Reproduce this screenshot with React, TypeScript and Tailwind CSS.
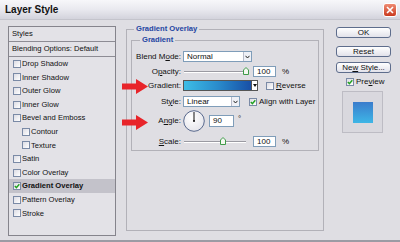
import React from "react";

const FONT = { fontFamily: '"Liberation Sans", Arial, sans-serif' };

function Check({ checked = false }: { checked?: boolean }) {
  return (
    <span className="flex h-[8px] w-[8px] shrink-0 items-center justify-center border border-[#7a8aa6] bg-gradient-to-br from-[#dcdce4] to-white">
      {checked && (
        <svg width="6" height="6" viewBox="0 0 6 6">
          <path d="M0.8 3 L2.4 4.6 L5.3 1.2" fill="none" stroke="#21a121" strokeWidth="1.4" />
        </svg>
      )}
    </span>
  );
}

function Btn({ children }: { children: React.ReactNode }) {
  return (
    <div className="flex h-[11px] w-[55px] items-center justify-center rounded-[3px] border border-[#5e6d8c] bg-gradient-to-b from-white to-[#e2e2ea] text-[8px] leading-none text-[#111]">
      {children}
    </div>
  );
}

function Select({ value, width }: { value: string; width: string }) {
  return (
    <div className={`flex h-[11px] items-center justify-between border border-[#7f9db9] bg-white pl-[3px] ${width}`}>
      <span className="text-[8px] leading-none">{value}</span>
      <span className="flex h-[9px] w-[8px] items-center justify-center border-l border-[#b8bccb] bg-[#eef0f6]">
        <svg width="5" height="4" viewBox="0 0 5 4">
          <path d="M0.5 0.8 L2.5 3 L4.5 0.8" fill="none" stroke="#222" strokeWidth="1" />
        </svg>
      </span>
    </div>
  );
}

function Slider({ width, pos }: { width: string; pos: number }) {
  return (
    <div className={`relative flex h-[11px] items-center ${width}`}>
      <div className="h-[2px] w-full border-t border-[#9a9aa2] bg-white" />
      <svg className="absolute top-[1px]" style={{ left: pos }} width="6" height="8" viewBox="0 0 6 8">
        <path d="M0.5 3 L3 0.5 L5.5 3 V7.5 H0.5 Z" fill="#f4f8f0" stroke="#3f9a4a" strokeWidth="1" />
      </svg>
    </div>
  );
}

function Input({ value, width }: { value: string; width: string }) {
  return (
    <div className={`flex h-[11px] items-center border border-[#7f9db9] bg-white pl-[3px] text-[8px] leading-none ${width}`}>
      {value}
    </div>
  );
}

function Arrow({ top }: { top: string }) {
  return (
    <svg className={`absolute left-[122px] ${top}`} width="26" height="15" viewBox="0 0 26 15">
      <path d="M0 4.5 H14 V0 L26 7.5 L14 15 V10.5 H0 Z" fill="#e8242a" />
    </svg>
  );
}

const items: { name: string; indent?: boolean; checked?: boolean; active?: boolean }[] = [
  { name: "Drop Shadow" },
  { name: "Inner Shadow" },
  { name: "Outer Glow" },
  { name: "Inner Glow" },
  { name: "Bevel and Emboss" },
  { name: "Contour", indent: true },
  { name: "Texture", indent: true },
  { name: "Satin" },
  { name: "Color Overlay" },
  { name: "Gradient Overlay", checked: true, active: true },
  { name: "Pattern Overlay" },
  { name: "Stroke" },
];

export default function App() {
  return (
    <div
      className="relative flex h-[242px] w-[400px] flex-col overflow-hidden border-b-2 border-[#9c9ba4] bg-[#dfdee3] text-[#111]"
      style={FONT}
    >
      {/* title bar */}
      <div className="flex h-[20px] shrink-0 items-center justify-between border-b border-[#c4c4cc] bg-gradient-to-b from-[#f7f7fa] via-[#e9e9ef] to-[#d3d3dc] pl-[5px] pr-[3px]">
        <span className="text-[10px] font-bold leading-none">Layer Style</span>
        <div className="flex h-[14px] w-[14px] items-center justify-center rounded-[3px] border border-white bg-gradient-to-b from-[#ee8a72] to-[#c9381c]">
          <svg width="8" height="8" viewBox="0 0 8 8">
            <path d="M1 1 L7 7 M7 1 L1 7" stroke="white" strokeWidth="1.6" />
          </svg>
        </div>
      </div>

      <div className="flex pt-[6px]">
        {/* styles list */}
        <div className="ml-[8px] flex h-[210px] w-[108px] flex-col border border-[#85848c] bg-[#e3e2e7] text-[7.6px] leading-none">
          <div className="flex h-[15px] items-center border-b border-[#8d8c94] pl-[3px]">Styles</div>
          <div className="flex h-[15px] items-center border-b border-[#8d8c94] pl-[3px]">
            Blending Options: Default
          </div>
          {items.map((it) => (
            <div
              key={it.name}
              className={`flex h-[13.6px] items-center gap-[1px] ${it.indent ? "pl-[13px]" : "pl-[4px]"} ${
                it.active ? "bg-[#c3c2ca] font-bold" : ""
              }`}
            >
              <Check checked={it.checked} />
              <span>{it.name}</span>
            </div>
          ))}
        </div>

        {/* Gradient Overlay group */}
        <fieldset className="ml-[10px] mt-[-2px] h-[207px] w-[198px] border border-[#b2b1b8]">
          <legend className="ml-[7px] px-[2px] text-[7.6px] font-bold leading-[10px] text-[#2446a2]">
            Gradient Overlay
          </legend>
          <fieldset className="ml-[4px] mt-[1px] h-[116px] w-[188px] border border-[#b2b1b8]">
            <legend className="ml-[8px] px-[2px] text-[7.6px] font-bold leading-[10px] text-[#2446a2]">
              Gradient
            </legend>
            <div className="flex flex-col text-[8px] leading-none">
              <div className="mt-[6px] flex h-[11px] items-center gap-[2px]">
                <span className="w-[49px] text-right">
                  Blend M<u>o</u>de:
                </span>
                <Select value="Normal" width="w-[69px]" />
              </div>
              <div className="mt-[4px] flex h-[11px] items-center gap-[2px]">
                <span className="w-[49px] text-right">
                  O<u>p</u>acity:
                </span>
                <Slider width="w-[64px] ml-[1px]" pos={59} />
                <div className="ml-[3px]">
                  <Input value="100" width="w-[23px]" />
                </div>
                <span className="ml-[4px]">%</span>
              </div>
              <div className="mt-[3px] flex h-[11px] items-center gap-[2px]">
                <span className="w-[49px] text-right">Gradient:</span>
                <div className="flex h-[11px] w-[75px] items-stretch border border-[#555]">
                  <div className="flex-1 bg-gradient-to-r from-[#3dbde6] via-[#2a8ccc] to-[#1a4fa6]" />
                  <div className="flex w-[6px] items-center justify-center border-l border-[#555] bg-white">
                    <svg width="4" height="3" viewBox="0 0 4 3">
                      <path d="M0 0 H4 L2 3 Z" fill="#111" />
                    </svg>
                  </div>
                </div>
                <div className="ml-[6px] flex items-center gap-[2px]">
                  <Check />
                  <span>
                    <u>R</u>everse
                  </span>
                </div>
              </div>
              <div className="mt-[5px] flex h-[11px] items-center gap-[2px]">
                <span className="w-[49px] text-right">
                  St<u>y</u>le:
                </span>
                <Select value="Linear" width="w-[57px]" />
                <div className="ml-[7px] flex items-center gap-[2px]">
                  <Check checked />
                  <span>Align with Layer</span>
                </div>
              </div>
              <div className="mt-[3px] flex h-[22px] items-center gap-[2px]">
                <span className="w-[49px] text-right">
                  A<u>n</u>gle:
                </span>
                <svg width="22" height="22" viewBox="0 0 22 22">
                  <defs>
                    <radialGradient id="dial" cx="0.4" cy="0.35" r="0.7">
                      <stop offset="0" stopColor="#ffffff" />
                      <stop offset="1" stopColor="#e4e4ea" />
                    </radialGradient>
                  </defs>
                  <circle cx="11" cy="11" r="10.3" fill="url(#dial)" stroke="#5a6a8e" strokeWidth="1" />
                  <path d="M11 11 V2" stroke="#111" strokeWidth="1" />
                  <circle cx="11" cy="11" r="1" fill="#111" />
                </svg>
                <div className="ml-[2px]">
                  <Input value="90" width="w-[25px] h-[12px]" />
                </div>
                <span className="ml-[2px] -mt-[5px]">°</span>
              </div>
              <div className="mt-[4px] flex h-[11px] items-center gap-[2px]">
                <span className="w-[49px] text-right">
                  <u>S</u>cale:
                </span>
                <Slider width="w-[62px] ml-[1px]" pos={36} />
                <div className="ml-[5px]">
                  <Input value="100" width="w-[23px]" />
                </div>
                <span className="ml-[4px]">%</span>
              </div>
            </div>
          </fieldset>
        </fieldset>

        {/* buttons */}
        <div className="ml-[12px] flex w-[55px] flex-col">
          <div className="mt-[1px]">
            <Btn>OK</Btn>
          </div>
          <div className="mt-[8px]">
            <Btn>Reset</Btn>
          </div>
          <div className="mt-[5px]">
            <Btn>
              <span>
                Ne<u>w</u> Style...
              </span>
            </Btn>
          </div>
          <div className="ml-[10px] mt-[4px] flex h-[10px] items-center gap-[2px] text-[8px] leading-none">
            <Check checked />
            <span>
              Pre<u>v</u>iew
            </span>
          </div>
          <div className="ml-[6px] mt-[4px] flex h-[42px] w-[41px] items-center justify-center border border-[#bdbcc4] bg-[#d9d8de]">
            <div className="h-[21px] w-[20px] bg-gradient-to-b from-[#3a7ccc] to-[#3eb6e6]" />
          </div>
        </div>
      </div>

      {/* annotation arrows */}
      <Arrow top="top-[79px]" />
      <Arrow top="top-[115px]" />
    </div>
  );
}
